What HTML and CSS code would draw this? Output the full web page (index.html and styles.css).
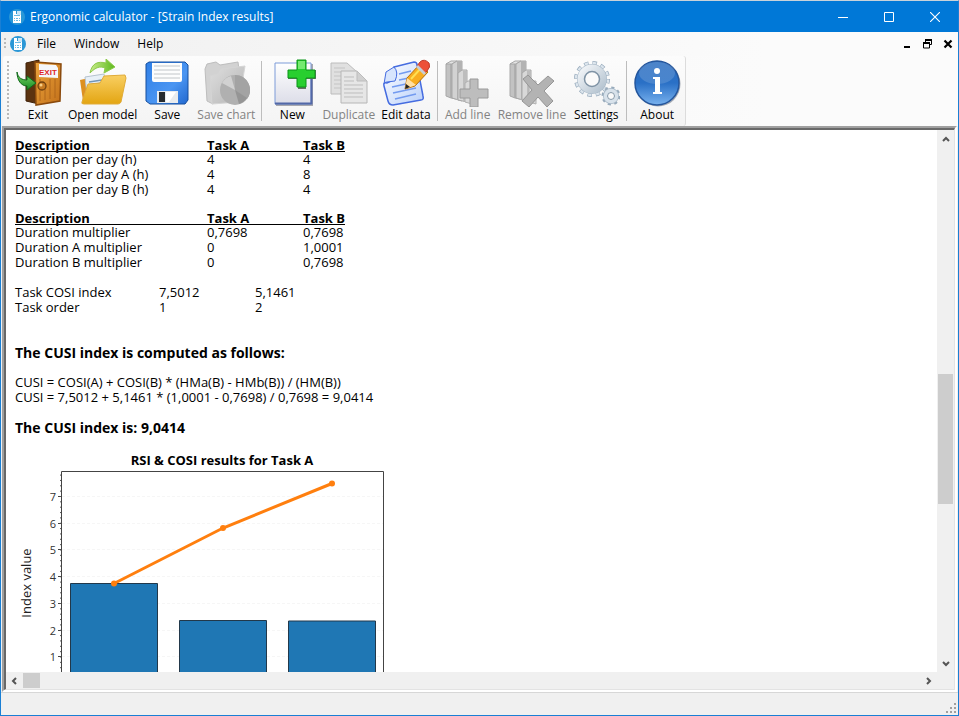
FILE: index.html
```html
<!DOCTYPE html>
<html lang="en">
<head>
<meta charset="utf-8">
<title>Ergonomic calculator - [Strain Index results]</title>
<link rel="stylesheet" href="styles.css">
</head>
<body>
<svg class="defs" aria-hidden="true">
  <defs>
    <linearGradient id="wood" x1="0" y1="0" x2="1" y2="1"><stop offset="0" stop-color="#eda53c"/><stop offset="1" stop-color="#c2701a"/></linearGradient>
    <linearGradient id="green" x1="0" y1="0" x2="0" y2="1"><stop offset="0" stop-color="#7fd96a"/><stop offset="1" stop-color="#158a22"/></linearGradient>
    <linearGradient id="lime" x1="0" y1="0" x2="1" y2="0"><stop offset="0" stop-color="#c9ec8a"/><stop offset="1" stop-color="#5cb81c"/></linearGradient>
    <linearGradient id="yellow" x1="0" y1="0" x2="0" y2="1"><stop offset="0" stop-color="#f9cf62"/><stop offset="1" stop-color="#e3a512"/></linearGradient>
    <linearGradient id="blue" x1="0" y1="0" x2="1" y2="1"><stop offset="0" stop-color="#2f7fe6"/><stop offset=".6" stop-color="#4a95f2"/><stop offset="1" stop-color="#2268cf"/></linearGradient>
    <linearGradient id="grey" x1="0" y1="0" x2="1" y2="1"><stop offset="0" stop-color="#dedede"/><stop offset="1" stop-color="#b4b4b4"/></linearGradient>
    <linearGradient id="pale" x1="0" y1="0" x2="0" y2="1"><stop offset="0" stop-color="#ffffff"/><stop offset="1" stop-color="#dcdde8"/></linearGradient>
    <linearGradient id="steel" x1="0" y1="0" x2="1" y2="1"><stop offset="0" stop-color="#f2f5f8"/><stop offset="1" stop-color="#b4c3d0"/></linearGradient>
    <linearGradient id="info" x1="0" y1="0" x2="0" y2="1"><stop offset="0" stop-color="#2d6fc0"/><stop offset=".5" stop-color="#2a70c6"/><stop offset="1" stop-color="#79b2ee"/></linearGradient>
    <linearGradient id="sheet" x1="0" y1="0" x2="1" y2="1"><stop offset="0" stop-color="#ffffff"/><stop offset="1" stop-color="#b9d0fa"/></linearGradient>
    <symbol id="app" viewBox="0 0 16 16">
      <circle cx="8" cy="8" r="8" fill="#2a97d6"/>
      <path d="M4 2h3v4H4zM4 5h8v9H4z" fill="#fff"/>
      <path d="M8 2h4v4H8z" fill="#cbe7f7"/>
      <path d="M5 6h6v1H5zM5 9h1v1H5zM7 9h2v1H7zM10 9h1v1h-1zM5 11h1v1H5zM7 11h2v1H7zM10 11h1v1h-1z" fill="#6bbbe4"/>
    </symbol>
    <symbol id="bars" viewBox="0 0 48 48">
      <path d="M2 5l5-2v36l-5-2zM7 3l5 1v36l-5-1z" fill="#c2c2c2" stroke="#a8a8a8"/>
      <path d="M2 5l5-3 6 0-5 3z" fill="#e4e4e4" stroke="#a8a8a8"/>
      <path d="M8 5l5-3h5v40l-10-3z" fill="#d2d2d2" stroke="#a8a8a8"/>
      <path d="M13 2l5 0v40l-5-1z" fill="#b3b3b3"/>
      <path d="M14 14l4-3h5v32l-9-2z" fill="#d8d8d8" stroke="#a8a8a8"/>
      <path d="M19 12h4v31l-4-1z" fill="#bdbdbd"/>
      <path d="M21 24l3-2h4v23l-7-2z" fill="#dadada" stroke="#b0b0b0"/>
    </symbol>
  </defs>
</svg>

<div class="window">
  <header class="titlebar">
    <svg class="app-icon"><use href="#app"/></svg>
    <h1 class="title">Ergonomic calculator - [Strain Index results]</h1>
    <div class="caption-buttons">
      <button class="caption-button" aria-label="Minimize"><svg class="glyph" viewBox="0 0 10 10"><path d="M0 5.5h10" stroke="#fff"/></svg></button>
      <button class="caption-button" aria-label="Maximize"><svg class="glyph" viewBox="0 0 10 10"><path d="M.5.5h9v9h-9z" fill="none" stroke="#fff"/></svg></button>
      <button class="caption-button" aria-label="Close"><svg class="glyph" viewBox="0 0 10 10"><path d="M0 0l10 10M10 0L0 10" stroke="#fff" stroke-width="1.1"/></svg></button>
    </div>
  </header>

  <nav class="menubar" aria-label="Main menu">
    <span class="grip grip-small"></span>
    <svg class="app-icon"><use href="#app"/></svg>
    <button class="menu">File</button>
    <button class="menu">Window</button>
    <button class="menu">Help</button>
    <div class="child-buttons">
      <button class="child-button" aria-label="Minimize document"><svg class="glyph" viewBox="0 0 10 10"><path d="M1 8h6" stroke="#000" stroke-width="2"/></svg></button>
      <button class="child-button" aria-label="Restore document"><svg class="glyph" viewBox="0 0 10 10"><path d="M2.500 3.500V.5h6v5h-2M.5 4h6v5h-6z" fill="none" stroke="#000"/><path d="M2 1h7M0 4h7" stroke="#000" stroke-width="2"/></svg></button>
      <button class="child-button" aria-label="Close document"><svg class="glyph" viewBox="0 0 10 10"><path d="M1.500 1.500l7 7M8.500 1.500l-7 7" stroke="#000" stroke-width="2.200"/></svg></button>
    </div>
  </nav>

  <div class="toolbar-row">
    <div class="toolbar" role="toolbar" aria-label="Tools">
      <span class="grip"></span>
      <button class="tool">
        <svg class="icon" viewBox="0 0 48 48">
          <path d="M12 4l13-3v44l-13-3z" fill="#5c3310" stroke="#3f220a"/>
          <path d="M21 3l26 2-1 37-24 4z" fill="url(#wood)" stroke="#8a4a0d" stroke-width="1.500"/>
          <path d="M26 20v22M31 30v11M36 20v20M41 20v19" stroke="#b0661a"/>
          <path d="M25 5l17 1 2 3v10l-19-1z" fill="#f4f7fb"/>
          <text x="25" y="16" class="exit-sign">EXIT</text>
          <circle cx="28" cy="27" r="4" fill="#c67a22" stroke="#70400f" stroke-width="1.300"/><circle cx="27" cy="26" r="1.500" fill="#f8cf86"/>
          <path d="M3 13c1 6 5 8 10 8v-4l9 7-9 7v-4C7 27 3 21 3 13z" fill="url(#green)" stroke="#126a1b"/>
        </svg>
        <span>Exit</span>
      </button>
      <button class="tool">
        <svg class="icon" viewBox="0 0 48 48">
          <path d="M1 21l9-2 3 25-9-2z" fill="#dd9021"/>
          <path d="M6 18l19-3 3 26-19 3z" fill="#e8f0f7" stroke="#b5c3cf"/>
          <path d="M10 23l13-2M10 26l13-2M11 29l12-2" stroke="#7396b8" stroke-width="1.500"/>
          <path d="M3 43l6-18 12-1 4-7 21-1 1 3-5 24q-1 2-3 2H5q-3 0-2-2z" fill="url(#yellow)" stroke="#e0ab38"/>
          <path d="M11 14C13 4 19 2 27 4V0l9 8-11 6 1-5C21 7 17 8 11 14z" fill="url(#lime)" stroke="#8cc94a"/>
        </svg>
        <span>Open model</span>
      </button>
      <button class="tool">
        <svg class="icon" viewBox="0 0 48 48">
          <path d="M6 3h36l3 3v35l-3 4H7l-4-3V5z" fill="url(#blue)" stroke="#174f9d"/>
          <path d="M9 4h30v17q0 2-2 2H11q-2 0-2-2z" fill="#fdfdfd"/>
          <path d="M11 7h26M11 11h26M11 15h26M11 19h26" stroke="#c2c6c9"/>
          <path d="M14 32h21v12H14z" fill="#e8ebee"/><path d="M16 33h6v10h-6z" fill="#272b2f"/><path d="M23 33h10l-7 10h-3z" fill="#fff"/>
        </svg>
        <span>Save</span>
      </button>
      <button class="tool" disabled>
        <svg class="icon" viewBox="0 0 48 48">
          <path d="M3 10l2-5 9-2 4 3 18-3 1 8-26 34-6-3z" fill="#d2d2d2" stroke="#bdbdbd"/>
          <path d="M8 17l8-2 3-5 24-3-6 36-27 2z" fill="url(#grey)" stroke="#d5d5d5"/>
          <circle cx="33" cy="31" r="15" fill="#b0b0b0"/>
          <path d="M33 31L20 24a15 15 0 0 1 9-7z" fill="#d1d1d1"/><path d="M33 31l0-15a15 15 0 0 1 12 24z" fill="#a3a3a3"/><path d="M33 31l12 8a15 15 0 0 1-8 6z" fill="#959595"/>
        </svg>
        <span>Save chart</span>
      </button>
      <span class="separator"></span>
      <button class="tool">
        <svg class="icon" viewBox="0 0 48 48">
          <path d="M8 5h37v42H8z" fill="#a8a8ae"/>
          <path d="M7 4h36v41H7z" fill="url(#pale)" stroke="#7c9bd8"/><path d="M7 44.500h36.500V16" fill="none" stroke="#5268a8" stroke-width="2"/>
          <path d="M30 2h8v9h10v9H38v10h-8V20H20v-9h10z" fill="#667366"/>
          <path d="M29 1h9v10h9v8h-9v9h-9v-9H20v-8h9z" fill="#28cf2f" stroke="#0a9418"/><path d="M30 2h7v8h-7z" fill="#75ea71"/>
        </svg>
        <span>New</span>
      </button>
      <button class="tool" disabled>
        <svg class="icon" viewBox="0 0 48 48">
          <path d="M6 4h16l10 9v22H6z" fill="#e0e0e0" stroke="#bcbcbc"/>
          <path d="M9 9h11M9 13h8M9 17h7M9 21h7M9 25h7M9 29h7" stroke="#c4c4c4"/>
          <path d="M16 12h16l10 10v22H16z" fill="#e6e6e6" stroke="#b6b6b6"/><path d="M32 12v10h10z" fill="#d0d0d0" stroke="#bcbcbc"/>
          <path d="M19 18h10M19 22h10M19 26h19M19 30h19M19 34h19M19 38h19" stroke="#bdbdbd"/>
        </svg>
        <span>Duplicate</span>
      </button>
      <button class="tool">
        <svg class="icon" viewBox="0 0 48 48">
          <path d="M12 8L32 3q3 0 3 3l6 31q1 4-2 4l-28 5q-4 0-5-4L2 27q-1-4 3-3l6-3q2-1 1-13z" fill="url(#sheet)" stroke="#456ce0" stroke-width="1.500"/>
          <path d="M12 8q5 5 1 14l-8 1q-3 0-3 2L4 13z" fill="#d7e5fd" stroke="#456ce0"/>
          <path d="M17 15l12-3M17 21l10-2M10 28l14-3M11 34l23-5M13 40l21-5" stroke="#729af0" stroke-width="1.500"/>
          <path d="M23 30l2-11 12-13 9 7-13 14z" fill="#f8ad1f" stroke="#b56d0b"/><path d="M25 19l9 7-11 4z" fill="#ffe0a4"/><path d="M23 30l1-5 4 3z" fill="#222"/>
          <path d="M29 20L40 8" stroke="#ffdf52" stroke-width="2"/>
          <path d="M35 7l3-4q4-4 9 1 2 4-2 8l-3 3z" fill="#ed5037" stroke="#bf3a29"/><path d="M34 8l8 8 2-2-8-8z" fill="#c7ced5"/>
        </svg>
        <span>Edit data</span>
      </button>
      <span class="separator"></span>
      <button class="tool" disabled>
        <svg class="icon" viewBox="0 0 48 48"><use href="#bars"/><path d="M26 20h8v10h10v9H34v9h-8v-9H16v-9h10z" fill="#bdbdbd" stroke="#9a9a9a"/></svg>
        <span>Add line</span>
      </button>
      <button class="tool" disabled>
        <svg class="icon" viewBox="0 0 48 48"><use href="#bars"/><path d="M15 20l5-4 10 10 10-9 6 5-10 10 9 10-6 6-9-10-9 10-7-6 10-11z" fill="#b3b3b3" stroke="#969696"/></svg>
        <span>Remove line</span>
      </button>
      <button class="tool">
        <svg class="icon" viewBox="0 0 48 48">
          <circle cx="20" cy="20" r="16" fill="none" stroke="#98abbc" stroke-width="4" stroke-dasharray="4.400 3.978"/>
          <circle cx="20" cy="20" r="16" fill="none" stroke="#dce5ed" stroke-width="2.500" stroke-dasharray="3.400 4.978" stroke-dashoffset="-.5"/>
          <circle cx="20" cy="20" r="11" fill="none" stroke="#a7b8c7" stroke-width="8"/>
          <circle cx="20" cy="20" r="11" fill="none" stroke="url(#steel)" stroke-width="7"/>
          <circle cx="20" cy="20" r="7.500" fill="#fafafa" stroke="#7f93a5" stroke-width="1.500"/>
          <circle cx="39" cy="37" r="8" fill="none" stroke="#98abbc" stroke-width="3" stroke-dasharray="3 3.283"/>
          <circle cx="39" cy="37" r="5.500" fill="#fafafa" stroke="#a7b8c7" stroke-width="5"/>
          <circle cx="39" cy="37" r="5.500" fill="#fafafa" stroke="#d8e2eb" stroke-width="3.500"/>
          <circle cx="39" cy="37" r="3.500" fill="#fafafa" stroke="#8498a9"/>
        </svg>
        <span>Settings</span>
      </button>
      <span class="separator"></span>
      <button class="tool">
        <svg class="icon" viewBox="0 0 48 48">
          <circle cx="25" cy="25" r="22.500" fill="#a5abb5"/><circle cx="24" cy="24" r="22" fill="url(#info)" stroke="#24569d" stroke-width="1.500"/>
          <ellipse cx="24" cy="14" rx="18" ry="11" fill="#fff" opacity=".15"/>
          <circle cx="24" cy="12" r="3" fill="#fff"/><path d="M20 18h7v15h2v2h-9v-2h2V20h-2z" fill="#fff"/>
        </svg>
        <span>About</span>
      </button>
    </div>
  </div>

  <main class="frame">
    <div class="view">
      <article class="report">
        <table class="data">
          <thead><tr><th class="name">Description</th><th class="task">Task A</th><th>Task B</th></tr></thead>
          <tbody>
            <tr><td>Duration per day (h)</td><td>4</td><td>4</td></tr>
            <tr><td>Duration per day A (h)</td><td>4</td><td>8</td></tr>
            <tr><td>Duration per day B (h)</td><td>4</td><td>4</td></tr>
          </tbody>
        </table>
        <table class="data">
          <thead><tr><th class="name">Description</th><th class="task">Task A</th><th>Task B</th></tr></thead>
          <tbody>
            <tr><td>Duration multiplier</td><td>0,7698</td><td>0,7698</td></tr>
            <tr><td>Duration A multiplier</td><td>0</td><td>1,0001</td></tr>
            <tr><td>Duration B multiplier</td><td>0</td><td>0,7698</td></tr>
          </tbody>
        </table>
        <table class="data summary">
          <tbody>
            <tr><td class="label">Task COSI index</td><td class="task">7,5012</td><td>5,1461</td></tr>
            <tr><td>Task order</td><td>1</td><td>2</td></tr>
          </tbody>
        </table>
        <h2 class="heading">The CUSI index is computed as follows:</h2>
        <p class="formula">CUSI = COSI(A) + COSI(B) * (HMa(B) - HMb(B)) / (HM(B))<br>CUSI = 7,5012 + 5,1461 * (1,0001 - 0,7698) / 0,7698 = 9,0414</p>
        <h2 class="heading">The CUSI index is: 9,0414</h2>
        <svg class="chart" viewBox="0 0 385 260" role="img" aria-label="RSI &amp; COSI results for Task A">
          <text x="207" y="30" class="chart-title">RSI &amp; COSI results for Task A</text>
          <path class="gridline" d="M47 61.500h321M47 88.500h321M47 114.500h321M47 141.500h321M47 168.500h321M47 195.500h321M47 221.500h321"/>
          <path class="bar" d="M55.500 260V148.500h87V260zM164.500 260V185.500h87V260zM273.500 260V186h87V260z"/>
          <path class="axis" d="M46.500 260V36.500h322V260"/>
          <path class="axis" d="M43 61.500h3M43 88.500h3M43 114.500h3M43 141.500h3M43 168.500h3M43 195.500h3M43 221.500h3"/>
          <path class="minor" d="M45.500 39.600V260"/>
          <g class="ticks"><text x="41" y="66">7</text><text x="41" y="93">6</text><text x="41" y="119">5</text><text x="41" y="146">4</text><text x="41" y="173">3</text><text x="41" y="200">2</text><text x="41" y="226">1</text></g>
          <text class="axis-title" transform="translate(16 148) rotate(-90)">Index value</text>
          <path class="trend" d="M99 148.500L208 93 317 48.500"/>
          <g class="points"><circle cx="99" cy="148.500" r="3"/><circle cx="208" cy="93" r="3"/><circle cx="317" cy="48.500" r="3"/></g>
        </svg>
      </article>
      <div class="scroll scroll-v">
        <button class="arrow" aria-label="Scroll up"><svg viewBox="0 0 8 8"><path d="M1 6l3-3 3 3"/></svg></button>
        <div class="track"><div class="thumb"></div></div>
        <button class="arrow" aria-label="Scroll down"><svg viewBox="0 0 8 8"><path d="M1 2l3 3 3-3"/></svg></button>
      </div>
      <div class="scroll scroll-h">
        <button class="arrow" aria-label="Scroll left"><svg viewBox="0 0 8 8"><path d="M5 1L2 4l3 3"/></svg></button>
        <div class="track"><div class="thumb"></div></div>
        <button class="arrow" aria-label="Scroll right"><svg viewBox="0 0 8 8"><path d="M2 1l3 3-3 3"/></svg></button>
      </div>
    </div>
  </main>

  <footer class="statusbar">
    <svg class="size-grip" viewBox="0 0 12 12"><path d="M9 1h2v2H9zM5 5h2v2H5zM9 5h2v2H9zM1 9h2v2H1zM5 9h2v2H5zM9 9h2v2H9z" fill="#a0a0a0"/></svg>
  </footer>
</div>
</body>
</html>
```
FILE: styles.css
```css
* {
  box-sizing: border-box;
}

body {
  margin: 0;
  font: 12px/16px "Open Sans", "Noto Sans", sans-serif;
  color: #000;
}

button {
  margin: 0;
  padding: 0;
  border: 0;
  background: none;
  color: inherit;
  font: inherit;
}

svg {
  display: block;
  flex: none;
}

.defs {
  position: absolute;
  width: 0;
  height: 0;
}

.window {
  display: flex;
  flex-direction: column;
  height: 100vh;
  border: 1px solid #1a7fd4;
  border-top-color: #c8d2da;
  background: #f0f0f0;
}

.titlebar {
  display: flex;
  align-items: center;
  height: 31px;
  padding-left: 8px;
  background: #0078d7;
  color: #fff;
}

.app-icon {
  width: 16px;
  height: 16px;
}

.title {
  margin: 0 0 0 5px;
  font-size: 12px;
  font-weight: 400;
}

.caption-buttons {
  display: flex;
  height: 100%;
  margin-left: auto;
}

.caption-button {
  display: flex;
  align-items: center;
  justify-content: center;
  width: 46px;
}

.glyph {
  width: 10px;
  height: 10px;
}

.menubar {
  display: flex;
  align-items: center;
  height: 24px;
  padding: 0 5px 0 3px;
  background: linear-gradient(90deg, #f0f0f0, #fbfbfb 80%);
}

.grip {
  width: 2px;
  height: 60px;
  margin-right: 2px;
  background: repeating-linear-gradient(#b8b8b8 0 2px, transparent 2px 4px);
}

.grip-small {
  height: 12px;
  margin-right: 4px;
}

.menu {
  margin-left: 11px;
  margin-right: 7px;
}

.child-buttons {
  display: flex;
  gap: 10px;
  margin-left: auto;
}

.toolbar-row {
  display: flex;
  height: 70px;
  padding-left: 2px;
  background: linear-gradient(90deg, #f3f3f3, #fbfbfb 80%);
}

.toolbar {
  display: flex;
  align-items: center;
  padding: 0 1px 0 4px;
  border-right: 1px solid #dcdcdc;
  border-radius: 3px;
  background: linear-gradient(#fcfcfc, #f4f4f4);
}

.tool {
  display: flex;
  flex-direction: column;
  align-items: center;
  min-width: 48px;
  margin: 0 3px;
  white-space: nowrap;
}

.tool:disabled {
  color: #838383;
}

.icon {
  width: 48px;
  height: 48px;
}

.exit-sign {
  font: bold 8px "Liberation Sans", sans-serif;
  fill: #e01f25;
}

.separator {
  width: 1px;
  height: 60px;
  margin: 0 3px;
  background: #bdbdbd;
}

.frame {
  flex: 1;
  min-height: 0;
  margin: 0 1px;
  border: 2px solid;
  border-color: #a0a0a0 #fff #fff #a0a0a0;
}

.view {
  display: grid;
  grid-template: minmax(0, 1fr) 17px / minmax(0, 1fr) 17px;
  height: 100%;
  border: solid;
  border-width: 2px 1px 1px 2px;
  border-color: #696969 #e3e3e3 #e3e3e3 #696969;
  background: #fff;
}

.report {
  overflow: hidden;
  padding: 8px 9px 0;
  font-size: 13px;
  line-height: 15px;
}

.data {
  margin-bottom: 14px;
  border-collapse: collapse;
  white-space: nowrap;
}

.data th,
.data td {
  height: 15px;
  padding: 0;
  text-align: left;
}

.data th {
  height: 14px;
  line-height: 14px;
  box-shadow: inset 0 -1px #000;
}

.data .name {
  width: 192px;
}

.data .label {
  width: 144px;
}

.data .task {
  width: 96px;
}

.data.summary {
  margin-top: 15px;
  margin-bottom: 30px;
}

.heading {
  margin: 0;
  font-size: 14px;
  font-weight: 700;
}

.formula {
  margin: 15px 0;
  white-space: nowrap;
}

.chart {
  width: 385px;
  height: 260px;
  font-family: "Open Sans", "Noto Sans", sans-serif;
}

.chart-title {
  font-size: 13px;
  font-weight: 700;
  text-anchor: middle;
}

.ticks {
  font-size: 11px;
  text-anchor: end;
  fill: #333;
}

.axis-title {
  font-size: 13px;
  text-anchor: middle;
  fill: #222;
}

.gridline {
  stroke: #f6f6f6;
  stroke-dasharray: 3 2;
}

.axis {
  fill: none;
  stroke: #444;
}

.minor {
  stroke: #555;
  stroke-width: 1;
  stroke-dasharray: 1 4.35;
}

.bar {
  fill: #1f77b4;
  stroke: #22384a;
}

.trend {
  fill: none;
  stroke: #ff7f0e;
  stroke-width: 3;
}

.points {
  fill: #ff7f0e;
}

.scroll {
  display: flex;
  background: #f0f0f0;
}

.scroll-v {
  flex-direction: column;
}

.scroll-h {
  grid-column: 1 / -1;
  padding-right: 17px;
}

.arrow {
  display: flex;
  align-items: center;
  justify-content: center;
  width: 17px;
  height: 17px;
}

.arrow svg {
  width: 8px;
  height: 8px;
  fill: none;
  stroke: #555;
  stroke-width: 2;
}

.track {
  display: flex;
  flex: 1;
}

.scroll-v .track {
  flex-direction: column;
}

.scroll-v .track::before {
  content: "";
  flex: 227 1 0;
}

.scroll-v .thumb {
  flex: 130 1 0;
  margin: 0 1px;
  background: #cdcdcd;
}

.scroll-v .track::after {
  content: "";
  flex: 151 1 0;
}

.scroll-h .thumb {
  width: 17px;
  margin: 1px 0;
  background: #cdcdcd;
}

.statusbar {
  display: flex;
  align-items: flex-end;
  justify-content: flex-end;
  height: 23px;
  padding: 1px;
  border-top: 1px solid #d7d7d7;
}

.size-grip {
  width: 12px;
  height: 12px;
}
```
